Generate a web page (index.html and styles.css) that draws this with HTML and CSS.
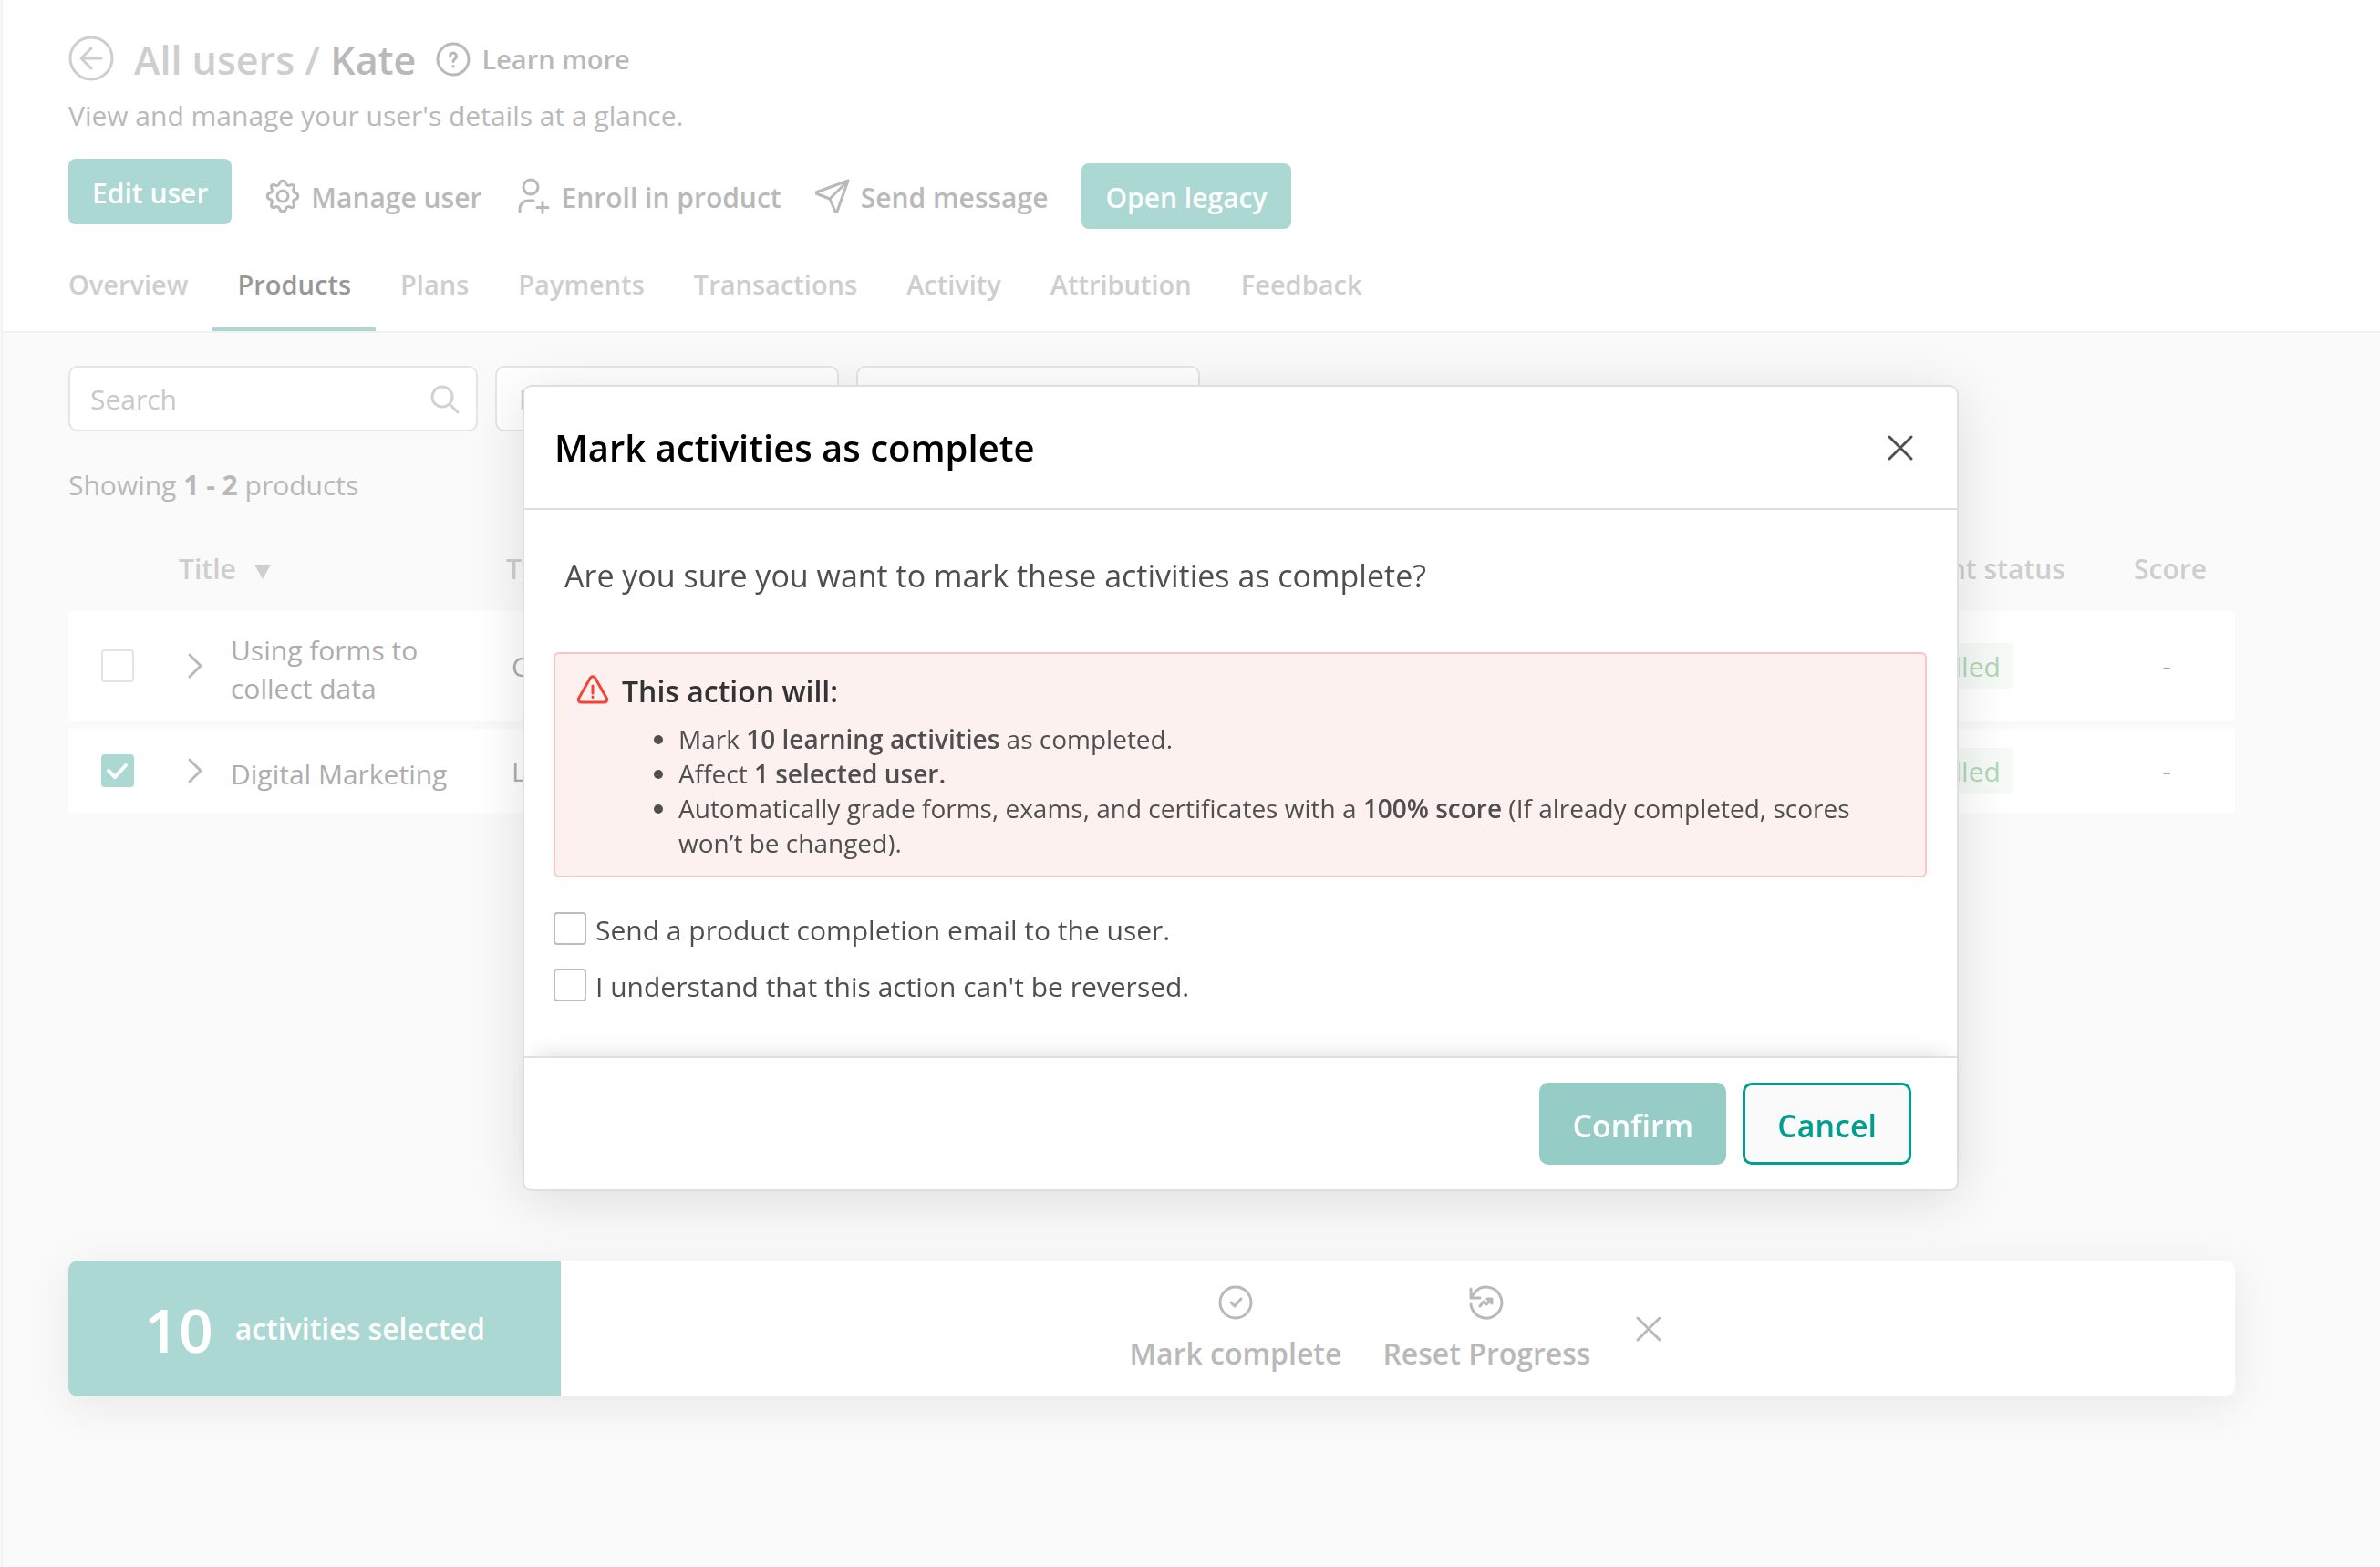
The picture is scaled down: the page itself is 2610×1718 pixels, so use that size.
FILE: index.html
```html
<!DOCTYPE html>
<html lang="en">
<head>
  <meta charset="UTF-8">
  <title>All users / Kate</title>
  <link rel="stylesheet" href="styles.css">
</head>
<body>

<div class="page">
  <header class="header">
    <div class="title-row">
      <a class="back" href="#" aria-label="Back">
        <svg viewBox="0 0 50 50" width="50" height="50"><circle cx="25" cy="25" r="23"/><path d="M36 25H14M25 14L14 25l11 11"/></svg>
      </a>
      <h1><a href="#">All users /</a> Kate</h1>
      <a class="link learn-more" href="#">
        <svg viewBox="0 0 38 38" width="38" height="38"><circle cx="19" cy="19" r="17"/><path d="M15.500 15.500a3.500 3.500 0 1 1 5.500 3c-1.500 1-2 1.500-2 3M19 26.500v.5"/></svg>
        Learn more
      </a>
    </div>
    <p class="subtitle">View and manage your user's details at a glance.</p>

    <div class="actions">
      <button class="btn btn-edit">Edit user</button>
      <button class="link">
        <svg viewBox="0 0 38 38" width="38" height="38"><path d="M15.500 5C16.500 1.300 21.500 1.300 22.500 5C23 7.300 25 8 27 7C30.500 5.500 32.500 7.500 31 11C30 13 30.700 15 33 15.500C36.700 16.500 36.700 21.500 33 22.500C30.700 23 30 25 31 27C32.500 30.500 30.500 32.500 27 31C25 30 23 30.700 22.500 33C21.500 36.700 16.500 36.700 15.500 33C15 30.700 13 30 11 31C7.500 32.500 5.500 30.500 7 27C8 25 7.300 23 5 22.500C1.300 21.500 1.300 16.500 5 15.500C7.300 15 8 13 7 11C5.500 7.500 7.500 5.500 11 7C13 8 15 7.300 15.500 5Z"/><circle cx="19" cy="19" r="6"/></svg>
        <span>Manage user</span>
      </button>
      <button class="link">
        <svg viewBox="0 0 38 42" width="38" height="42"><circle cx="17" cy="11" r="8"/><path d="M5 38v-3a9 9 0 0 1 9-9h6M24 33.500h12M30 27.500v12"/></svg>
        <span>Enroll in product</span>
      </button>
      <button class="link">
        <svg viewBox="0 0 38 38" width="38" height="38"><path d="M36 2L2 14.500a1 1 0 0 0 0 2L16 22l6 14a1 1 0 0 0 2 0L36 2L16 22"/></svg>
        <span>Send message</span>
      </button>
      <button class="btn">Open legacy</button>
    </div>

    <nav class="tabs">
      <a href="#">Overview</a>
      <a class="active" href="#">Products</a>
      <a href="#">Plans</a>
      <a href="#">Payments</a>
      <a href="#">Transactions</a>
      <a href="#">Activity</a>
      <a href="#">Attribution</a>
      <a href="#">Feedback</a>
    </nav>
  </header>

  <main class="content">
    <div class="filters">
      <div class="search">
        <input type="text" placeholder="Search" aria-label="Search">
        <svg viewBox="0 0 32 32" width="32" height="32"><circle cx="13" cy="13" r="11"/><path d="M21 21l9 9"/></svg>
      </div>
      <select aria-label="Product type"><option>Product type</option></select>
      <select aria-label="Status"><option></option></select>
    </div>

    <p class="count">Showing <strong>1 - 2</strong> products</p>

    <table class="products">
      <colgroup>
        <col class="col-check">
        <col class="col-toggle">
        <col class="col-title">
        <col>
        <col class="col-status">
        <col class="col-score">
      </colgroup>
      <thead>
        <tr>
          <th></th>
          <th class="th-title" colspan="2">Title <span class="sort"></span></th>
          <th>Type</th>
          <th class="center">Enrollment status</th>
          <th class="center th-score">Score</th>
        </tr>
      </thead>
      <tbody>
        <tr>
          <td><input class="check" type="checkbox" aria-label="Using forms to collect data"></td>
          <td><button class="toggle" aria-label="Expand"><svg viewBox="0 0 18 30" width="18" height="30"><path d="M3 3l12 12L3 27"/></svg></button></td>
          <td class="title">Using forms to collect data</td>
          <td class="type">Course</td>
          <td class="center"><span class="tag">Enrolled</span></td>
          <td class="center">-</td>
        </tr>
        <tr>
          <td><input class="check" type="checkbox" aria-label="Digital Marketing" checked></td>
          <td><button class="toggle" aria-label="Expand"><svg viewBox="0 0 18 30" width="18" height="30"><path d="M3 3l12 12L3 27"/></svg></button></td>
          <td class="title">Digital Marketing</td>
          <td class="type">Learning program</td>
          <td class="center"><span class="tag">Enrolled</span></td>
          <td class="center">-</td>
        </tr>
      </tbody>
    </table>

    <div class="bulk-bar">
      <div class="selected"><span class="number">10</span> activities selected</div>
      <div class="bulk-actions">
        <button class="bulk">
          <svg viewBox="0 0 38 38" width="38" height="38"><circle cx="19" cy="19" r="17"/><path d="M14 19l4 4 7-8"/></svg>
          Mark complete
        </button>
        <button class="bulk">
          <svg viewBox="0 0 38 38" width="38" height="38"><path d="M2 4v10h10M2 14l5-7a17 17 0 1 1-5 14M12 23l4-5 3 3 5-5M20 15h5v5z"/></svg>
          Reset Progress
        </button>
        <button class="bulk" aria-label="Clear selection">
          <svg viewBox="0 0 38 38" width="38" height="38"><path d="M7 7l24 24M31 7L7 31"/></svg>
        </button>
      </div>
    </div>
  </main>
</div>

<div class="overlay">
  <div class="modal" role="dialog" aria-labelledby="modalTitle">
    <div class="modal-header">
      <h2 id="modalTitle">Mark activities as complete</h2>
      <button class="close" aria-label="Close">
        <svg viewBox="0 0 38 38" width="38" height="38"><path d="M7 7l24 24M31 7L7 31"/></svg>
      </button>
    </div>

    <div class="modal-body">
      <p class="question">Are you sure you want to mark these activities as complete?</p>

      <div class="alert">
        <h3>
          <svg viewBox="0 0 36 36" width="36" height="36"><path d="M15.500 3L2.500 26a3 3 0 0 0 2.500 4h26a3 3 0 0 0 2.500-4L20.500 3a3 3 0 0 0-5 0zM18 12v8M18 24v.500"/></svg>
          This action will:
        </h3>
        <ul>
          <li>Mark <strong>10 learning activities</strong> as completed.</li>
          <li>Affect <strong>1 selected user.</strong></li>
          <li>Automatically grade forms, exams, and certificates with a <strong>100% score</strong> (If already completed, scores won’t be changed).</li>
        </ul>
      </div>

      <div class="option">
        <input class="check" type="checkbox" id="sendEmail">
        <label for="sendEmail">Send a product completion email to the user.</label>
      </div>
      <div class="option">
        <input class="check" type="checkbox" id="understand">
        <label for="understand">I understand that this action can't be reversed.</label>
      </div>
    </div>

    <div class="modal-footer">
      <button class="confirm">Confirm</button>
      <button class="cancel">Cancel</button>
    </div>
  </div>
</div>

</body>
</html>
```

FILE: styles.css
```css
* {
  box-sizing: border-box;
}

body {
  margin: 0;
  font-family: "Segoe UI", "Open Sans", sans-serif;
  font-size: 30px;
  line-height: 42px;
  color: #b9b9b9;
  background-color: #fafafa;
}

h1, h2, h3, p, ul {
  margin: 0;
}

a {
  color: inherit;
  text-decoration: none;
}

button, input, select {
  font: inherit;
  color: inherit;
}

button {
  padding: 0;
  border: none;
  background: none;
  cursor: pointer;
}

svg {
  flex: none;
  fill: none;
  stroke: currentColor;
  stroke-width: 3;
  stroke-linecap: round;
  stroke-linejoin: round;
}

.page {
  display: flex;
  flex-direction: column;
  min-height: 100vh;
  margin-left: 1px;
  border-left: 2px solid #f2f2f2;
}

/* header */
.header {
  padding: 39px 72px 0;
  border-bottom: 2px solid #f2f2f2;
  background-color: #fff;
}

.title-row {
  display: flex;
  align-items: center;
  gap: 22px;
  height: 50px;
}

.back {
  display: flex;
  color: #cecece;
}

h1 {
  padding-top: 4px;
  font-size: 43px;
  font-weight: 600;
}

h1 a {
  color: #cecece;
}

.link {
  display: flex;
  align-items: center;
  gap: 12px;
  font-weight: 600;
}

.learn-more {
  padding-top: 2px;
  font-size: 29px;
}

.subtitle {
  margin-top: 17px;
}

.actions {
  display: flex;
  align-items: flex-end;
  gap: 37px;
  height: 77px;
  margin-top: 26px;
}

.actions .link {
  height: 72px;
}

.actions .link span {
  padding-top: 4px;
}

.btn {
  height: 72px;
  padding: 4px 26px 0;
  border-radius: 8px;
  background-color: #abd8d2;
  color: #fff;
  font-weight: 600;
}

.btn-edit {
  align-self: flex-start;
}

.tabs {
  display: flex;
  margin: 40px 0 0 -27px;
  color: #cecece;
  font-size: 29px;
  font-weight: 600;
}

.tabs a {
  padding: 0 27px 26px;
  border-bottom: 4px solid transparent;
}

.tabs .active {
  border-color: #abd8d2;
  color: #979797;
}

/* content */
.content {
  display: flex;
  flex-direction: column;
  flex: 1;
  padding: 36px 159px 187px 72px;
}

.filters {
  display: flex;
  gap: 19px;
}

.search {
  display: flex;
  align-items: center;
  width: 449px;
  height: 72px;
  padding: 2px 18px 0 22px;
  border: 2px solid #e5e5e5;
  border-radius: 10px;
  background-color: #fff;
  color: #d2d2d2;
}

.search input {
  flex: 1;
  min-width: 0;
  padding: 0;
  border: none;
  outline: none;
  background: none;
}

.search input::placeholder {
  color: #c8c8c8;
}

.filters select {
  width: 377px;
  height: 72px;
  padding: 2px 24px 0;
  border: 2px solid #e5e5e5;
  border-radius: 10px;
  background-color: #fff;
  color: #c8c8c8;
  appearance: none;
}

.count {
  margin-top: 38px;
}

.products {
  width: 100%;
  margin-top: 21px;
  table-layout: fixed;
  border-spacing: 0 9px;
}

.col-check {
  width: 108px;
}

.col-toggle {
  width: 62px;
}

.col-title {
  width: 310px;
}

.col-status {
  width: 330px;
}

.col-score {
  width: 150px;
}

.products th {
  height: 78px;
  padding: 4px 0 0;
  color: #cecece;
  font-weight: 600;
  text-align: left;
}

.products .th-title {
  padding-left: 13px;
}

.products .th-score {
  padding-left: 8px;
}

.sort {
  display: inline-block;
  margin-left: 12px;
  border: 9px solid transparent;
  border-top: 16px solid #cecece;
  border-bottom: none;
}

.products td {
  height: 92px;
  padding: 0;
  background-color: #fff;
  color: #adadad;
}

.products .center {
  text-align: center;
}

.products .title {
  padding: 22px 16px 14px 8px;
}

.products .type {
  padding: 2px 0 0 6px;
}

.tag {
  display: inline-block;
  padding: 5px 14px 3px;
  border-radius: 4px;
  background-color: #f5faf7;
  color: #b3d6b5;
}

.check {
  appearance: none;
  display: block;
  flex: none;
  width: 36px;
  height: 36px;
  margin: 0;
  border: 2px solid #e3e3e3;
  border-radius: 4px;
  background-color: #fff;
}

.products .check,
.toggle {
  display: block;
  margin: 0 auto;
}

.check:checked {
  border-color: #abd8d2;
  background: #abd8d2 url("data:image/svg+xml,%3Csvg xmlns='http://www.w3.org/2000/svg' viewBox='0 0 32 32' fill='none' stroke='white' stroke-width='4' stroke-linecap='round' stroke-linejoin='round'%3E%3Cpath d='M6 16l7 7L25 10'/%3E%3C/svg%3E") center no-repeat;
}

.toggle {
  color: #b9b9b9;
}

.toggle svg {
  display: block;
}

/* bulk actions bar */
.bulk-bar {
  display: flex;
  height: 149px;
  margin-top: auto;
  border-radius: 10px;
  background-color: #fff;
  box-shadow: 0 10px 50px rgba(0, 0, 0, 0.08);
  font-size: 32px;
  font-weight: 600;
}

.selected {
  display: flex;
  align-items: center;
  justify-content: center;
  gap: 24px;
  width: 540px;
  border-radius: 10px 0 0 10px;
  background-color: #abd8d2;
  color: #fff;
}

.number {
  font-size: 66px;
}

.bulk-actions {
  display: flex;
  flex: 1;
  align-items: center;
  justify-content: center;
  gap: 45px;
}

.bulk {
  display: flex;
  flex-direction: column;
  align-items: center;
  gap: 16px;
}

/* modal */
.overlay {
  position: fixed;
  inset: 0;
  display: flex;
  align-items: center;
  justify-content: center;
  padding: 10px 0 0 111px;
}

.modal {
  width: 90%;
  max-width: 1575px;
  border: 2px solid #dfdfdf;
  border-radius: 10px;
  background-color: #fff;
  box-shadow: 0 10px 60px rgba(0, 0, 0, 0.12);
  color: #4f4f4f;
}

.modal-header {
  display: flex;
  align-items: center;
  justify-content: space-between;
  height: 135px;
  padding: 0 43px 0 33px;
  border-bottom: 2px solid #dfdfdf;
}

.modal-header h2 {
  color: #000;
  font-size: 40px;
  font-weight: 600;
}

.close {
  display: flex;
}

.modal-body {
  padding: 51px 33px 60px 32px;
}

.question {
  padding: 0 12px;
  font-size: 34px;
}

.alert {
  margin: 63px 0 38px;
  padding: 19px 60px 17px 23px;
  border: 2px solid #fbc4c4;
  border-radius: 6px;
  background-color: #fdf1ef;
}

.alert h3 {
  display: flex;
  align-items: center;
  gap: 14px;
  color: #333;
  font-size: 32px;
  font-weight: 600;
  line-height: 44px;
}

.alert svg {
  color: #f44336;
}

.alert ul {
  margin-top: 11px;
  padding-left: 112px;
  font-size: 28px;
  line-height: 38px;
}

.alert strong {
  font-weight: 600;
}

.option {
  display: flex;
  align-items: center;
  gap: 10px;
  height: 36px;
}

.option label {
  padding-top: 4px;
}

.option + .option {
  margin-top: 26px;
}

.option .check {
  border-color: #bdbdbd;
}

.modal-footer {
  display: flex;
  align-items: center;
  justify-content: flex-end;
  gap: 18px;
  height: 146px;
  padding-right: 50px;
  border-top: 2px solid #dfdfdf;
  border-radius: 0 0 8px 8px;
  box-shadow: 0 -12px 24px -12px rgba(0, 0, 0, 0.14);
}

.modal-footer button {
  height: 90px;
  padding: 4px 35px 0;
  border: 3px solid #009e8e;
  border-radius: 10px;
  background-color: #fafafa;
  color: #009e8e;
  font-size: 34px;
  font-weight: 600;
}

.modal-footer .confirm {
  padding: 4px 33px 0;
  border-color: #96ccc6;
  background-color: #96ccc6;
  color: #fff;
}
```
